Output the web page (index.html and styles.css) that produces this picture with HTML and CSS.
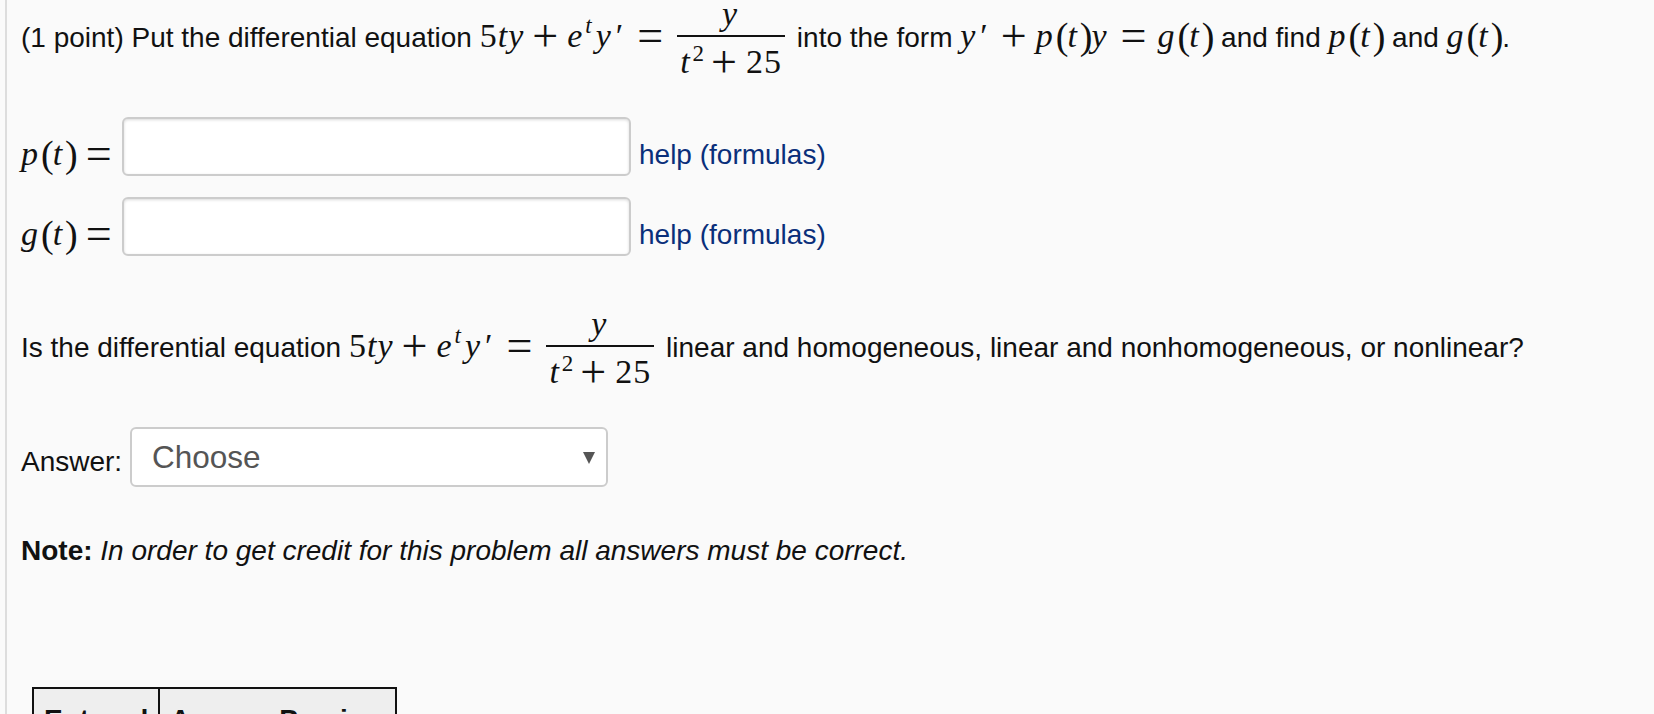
FILE: index.html
```html
<!DOCTYPE html>
<html lang="en">

<head>
  <meta charset="UTF-8">
  <title>Problem</title>
  <link rel="stylesheet" href="styles.css">
</head>

<body>
  <div class="problem">
    <!-- 1. first question -->
    <p class="line first">(1 point) Put the differential equation <span class="math"><span class="n">5</span><i>ty</i><span class="op">+</span><i>e</i><sup>t</sup><i>y</i><span class="prime">′</span><span class="eq">=</span><span class="frac"><span class="top"><i>y</i></span><span class="bot"><i>t</i><sup class="up">2</sup><span class="op">+</span>25</span></span></span> into the form <span class="math"><i>y</i><span class="prime">′</span><span class="op wide">+</span><i>p</i><span class="par">(</span><i>t</i><span class="par">)</span><i>y</i><span class="eq">=</span><i>g</i><span class="par">(</span><i>t</i><span class="par">)</span></span> and find <span class="math"><i>p</i><span class="par">(</span><i>t</i><span class="par">)</span></span> and <span class="math"><i>g</i><span class="par">(</span><i>t</i><span class="par">)</span></span>.</p>

    <div class="answer-row row-p">
      <span class="math label"><i>p</i><span class="par">(</span><i>t</i><span class="par">)</span><span class="eq">=</span></span>
      <input class="box" type="text">
      <a class="help" href="#">help (formulas)</a>
    </div>
    <div class="answer-row row-g">
      <span class="math label"><i>g</i><span class="par">(</span><i>t</i><span class="par">)</span><span class="eq">=</span></span>
      <input class="box" type="text">
      <a class="help" href="#">help (formulas)</a>
    </div>

    <!-- 2. second question -->
    <p class="line second">Is the differential equation <span class="math"><span class="n">5</span><i>ty</i><span class="op">+</span><i>e</i><sup>t</sup><i>y</i><span class="prime">′</span><span class="eq">=</span><span class="frac"><span class="top"><i>y</i></span><span class="bot"><i>t</i><sup class="up">2</sup><span class="op">+</span>25</span></span></span> linear and homogeneous, linear and nonhomogeneous, or nonlinear?</p>

    <div class="choose-row">
      <span class="choose-label">Answer:</span>
      <div class="select-wrap">
        <select class="choose">
          <option>Choose</option>
        </select>
        <span class="arrow"></span>
      </div>
    </div>

    <p class="note"><b>Note:</b> <em>In order to get credit for this problem all answers must be correct.</em></p>

    <!-- 3. preview table -->
    <table class="preview">
      <tr>
        <th class="entered">Entered</th>
        <th class="shown">Answer Preview</th>
      </tr>
    </table>
  </div>
</body>

</html>
```

FILE: styles.css
```css
* {
  margin: 0;
  padding: 0;
  box-sizing: border-box;
}

html,
body {
  height: 714px;
  overflow: hidden;
}

body {
  background-color: #fafafa;
  color: #111;
  font-family: "Liberation Sans", Arial, sans-serif;
  font-size: 28px;
  padding-left: 5px;
}

.problem {
  height: 714px;
  border-left: 2px solid #ddd;
  padding-left: 14px;
  overflow: hidden;
}

.line {
  white-space: nowrap;
  line-height: 36px;
}

.first {
  margin-top: -1px;
  height: 77px;
}

.second {
  margin-top: 53px;
  height: 78px;
}

.math {
  font-family: "Liberation Serif", "Times New Roman", serif;
  font-size: 34px;
  letter-spacing: 1px;
}

.math i {
  padding-right: 2px;
}

.math sup {
  font-size: 23px;
  font-style: italic;
  line-height: 0;
  vertical-align: 14px;
  margin-right: 3px;
}

.math .up {
  font-style: normal;
  vertical-align: 12px;
  margin-right: 0;
}

.par {
  font-size: 38px;
  line-height: 0;
  letter-spacing: -1px;
  vertical-align: -2px;
}

.op {
  font-size: 46px;
  line-height: 0;
  letter-spacing: 0;
  vertical-align: -4px;
  margin: 0 9px 0 6px;
}

.wide {
  margin-left: 10px;
}

.eq {
  font-size: 46px;
  line-height: 0;
  letter-spacing: 0;
  vertical-align: -4px;
  margin: 0 11px;
}

.label .eq {
  margin-left: 9px;
}

.prime {
  font-size: 34px;
  margin: 0 2px;
}

.frac {
  display: inline-flex;
  flex-direction: column;
  align-items: center;
  vertical-align: middle;
  margin: 0 4px 0 3px;
  position: relative;
  top: 0;
}

.top {
  height: 36px;
  line-height: 30px;
  padding: 0 3px;
}

.bot {
  height: 44px;
  line-height: 50px;
  padding: 0 3px;
  border-top: 2px solid #111;
  white-space: nowrap;
}

.answer-row {
  display: flex;
  align-items: center;
  height: 59px;
  margin-top: 21px;
}

.row-p {
  margin-top: 41px;
}

.label {
  width: 101px;
  flex-shrink: 0;
  margin-top: 14px;
}

.box {
  width: 509px;
  height: 59px;
  background-color: #fff;
  border: 2px solid #ccc;
  border-radius: 6px;
  box-shadow: inset 0 1px 3px rgba(0, 0, 0, .15);
}

.help {
  margin-left: 8px;
  margin-top: 16px;
  color: #0a2f7a;
  text-decoration: none;
}

.choose-row {
  display: flex;
  align-items: center;
  margin-top: 40px;
}

.choose-label {
  width: 109px;
  margin-top: 10px;
}

.select-wrap {
  position: relative;
  width: 478px;
  height: 60px;
}

.choose {
  width: 100%;
  height: 100%;
  appearance: none;
  background-color: #fff;
  border: 2px solid #ccc;
  border-radius: 6px;
  color: #555;
  font-family: inherit;
  font-size: 31.5px;
  padding: 0 20px;
}

.arrow {
  position: absolute;
  top: 25px;
  right: 13px;
  border-left: 6px solid transparent;
  border-right: 6px solid transparent;
  border-top: 12px solid #555;
}

.note {
  margin-top: 46px;
  line-height: 36px;
}

.preview {
  margin: 118px 0 0 11px;
  border-collapse: collapse;
  border: 2px solid #111;
}

.preview th {
  height: 60px;
  padding: 15px 10px 0;
  background-color: #eee;
  border: 2px solid #111;
  font-size: 28px;
  text-align: left;
  vertical-align: top;
  white-space: nowrap;
}
```
